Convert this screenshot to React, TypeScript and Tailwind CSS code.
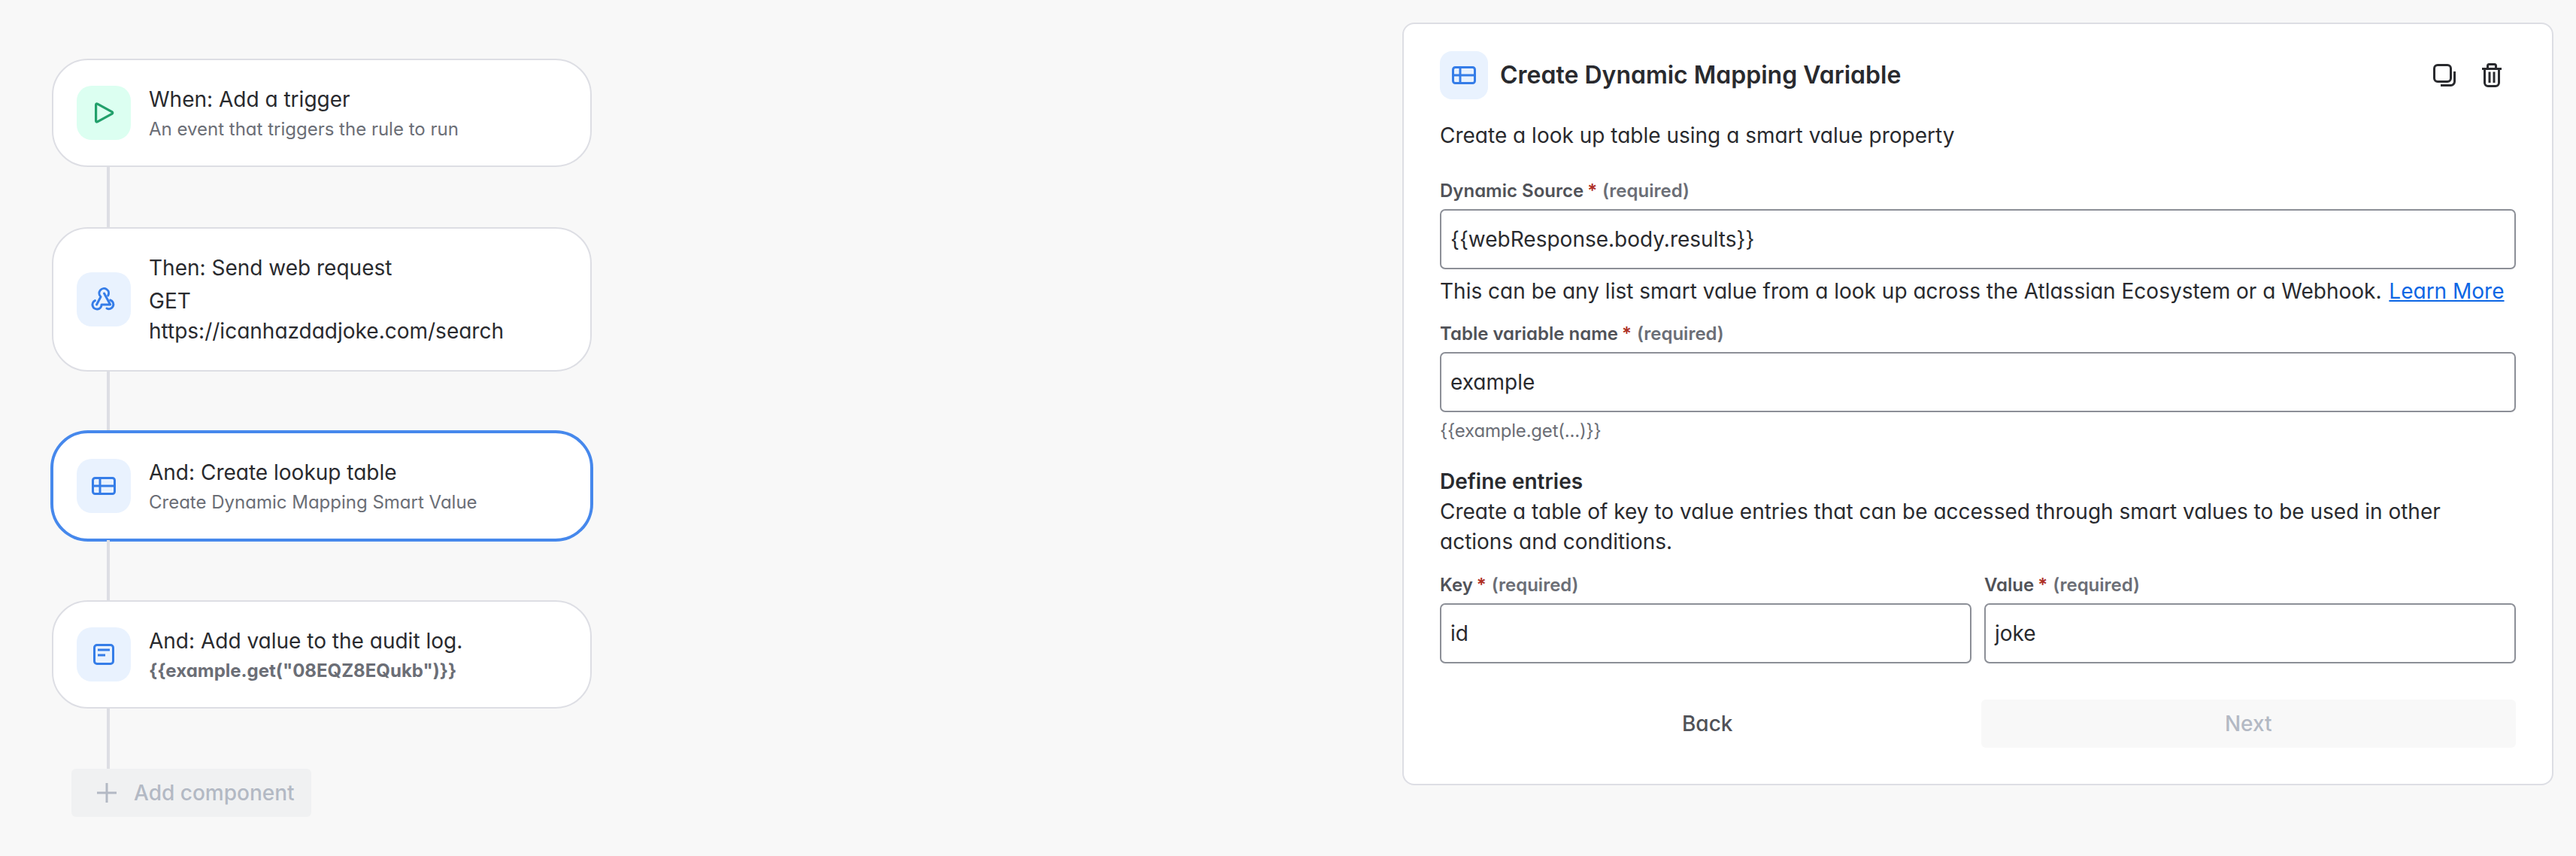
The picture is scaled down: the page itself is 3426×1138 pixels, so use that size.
import React from "react";

const BLUE = "#357de8";

function IconBox({ green, children }: { green?: boolean; children: React.ReactNode }) {
  return (
    <div className={`flex h-[72px] w-[72px] shrink-0 items-center justify-center rounded-[20px] ${green ? "bg-[#dcfff1]" : "bg-[#e9f2fe]"}`}>
      {children}
    </div>
  );
}

function PlayIcon() {
  return (
    <svg width="72" height="72" viewBox="0 0 72 72" fill="none">
      <path
        d="M25.6 25.5Q25.6 23.3 27.6 24.2L46.8 34.6Q48.8 36 46.8 37.4L27.6 47.8Q25.6 48.7 25.6 46.5Z"
        stroke="#22a06b"
        strokeWidth="3.2"
        strokeLinejoin="round"
      />
    </svg>
  );
}

function WebhookIcon() {
  return (
    <svg width="72" height="72" viewBox="0 0 72 72" fill="none" stroke={BLUE} strokeWidth="3" strokeLinecap="round" strokeLinejoin="round">
      <path d="M26.5 43L32 32.5A6.3 6.3 0 1 1 41.7 31" />
      <path d="M36.5 28L44.7 43H33A6 6 0 1 1 24.4 37.6" />
      <path d="M44.7 37A6 6 0 1 1 40 48" />
    </svg>
  );
}

function TableIcon() {
  return (
    <svg width="32" height="24" viewBox="0 0 32 24" fill="none" stroke={BLUE} strokeWidth="3">
      <rect x="1.5" y="1.5" width="29" height="21" rx="3" />
      <path d="M1.5 12H30.5M11 1.5V22.5" />
    </svg>
  );
}

function LogIcon() {
  return (
    <svg width="28" height="28" viewBox="0 0 28 28" fill="none" stroke={BLUE} strokeWidth="3">
      <rect x="1.5" y="1.5" width="25" height="25" rx="3.5" />
      <path d="M6 8H22M6 15H16" />
    </svg>
  );
}

function CopyIcon() {
  return (
    <svg width="30" height="30" viewBox="0 0 30 30" fill="none" stroke="#292a2e" strokeWidth="3">
      <rect x="1.5" y="1.5" width="22" height="22" rx="4.5" />
      <path d="M28.5 10V23.5a5 5 0 0 1-5 5H10" />
    </svg>
  );
}

function TrashIcon() {
  return (
    <svg width="26" height="32" viewBox="0 0 26 32" fill="none" stroke="#292a2e" strokeWidth="3">
      <path d="M0 7.5H26" />
      <path d="M7.5 7V3.5a2 2 0 0 1 2-2h7a2 2 0 0 1 2 2V7" />
      <path d="M3.5 7.5V26a4.5 4.5 0 0 0 4.5 4.5h10a4.5 4.5 0 0 0 4.5-4.5V7.5" />
      <path d="M10 11.5V26M16 11.5V26" />
    </svg>
  );
}

function Node({
  icon,
  green,
  selected,
  children,
}: {
  icon: React.ReactNode;
  green?: boolean;
  selected?: boolean;
  children: React.ReactNode;
}) {
  return (
    <div
      className={`flex items-center gap-[24px] rounded-[48px] bg-white px-[31px] py-[32px] ${
        selected ? "border-2 border-[#4688ec] shadow-[0_0_0_2px_#4688ec]" : "border-2 border-[#dddee4]"
      }`}
    >
      <IconBox green={green}>{icon}</IconBox>
      <div className="min-w-0">{children}</div>
    </div>
  );
}

function Connector() {
  return <div className="ml-[73px] h-[80px] w-[4px] bg-[#dddee4]" />;
}

function Title({ children, className = "" }: { children: React.ReactNode; className?: string }) {
  return <div className={`text-[28px] leading-[40px] text-[#292a2e] ${className}`}>{children}</div>;
}

function Sub({ bold, children }: { bold?: boolean; children: React.ReactNode }) {
  return <div className={`mt-[4px] text-[24px] leading-[32px] text-[#6b6e76] ${bold ? "font-bold" : ""}`}>{children}</div>;
}

function Label({ children }: { children: React.ReactNode }) {
  return (
    <div className="text-[24px] leading-[32px] font-semibold text-[#505258]">
      {children}
      <span className="ml-[5px] text-[#ae2e24]">*</span>
      <span className="ml-[7px] text-[#6b6e76]">(required)</span>
    </div>
  );
}

function Field({ children }: { children: React.ReactNode }) {
  return (
    <div className="mt-[8px] flex h-[80px] items-center rounded-[7px] border-2 border-[#8c8f97] bg-white pl-[12px] text-[28px] text-[#292a2e]">
      {children}
    </div>
  );
}

export default function App() {
  return (
    <div className="flex min-h-[1138px] w-full bg-[#f8f8f8] font-['Inter',sans-serif] [font-feature-settings:'cv11']">
      <div className="ml-[69px] mt-[78px] w-[718px]">
        <Node green icon={<PlayIcon />}>
          <Title>When: Add a trigger</Title>
          <Sub>An event that triggers the rule to run</Sub>
        </Node>
        <Connector />
        <Node icon={<WebhookIcon />}>
          <Title>Then: Send web request</Title>
          <Title className="mt-[4px]">GET</Title>
          <Title>https://icanhazdadjoke.com/search</Title>
        </Node>
        <Connector />
        <Node selected icon={<TableIcon />}>
          <Title>And: Create lookup table</Title>
          <Sub>Create Dynamic Mapping Smart Value</Sub>
        </Node>
        <Connector />
        <Node icon={<LogIcon />}>
          <Title>And: Add value to the audit log.</Title>
          <Sub bold>{'{{example.get("08EQZ8EQukb")}}'}</Sub>
        </Node>
        <Connector />
        <div className="ml-[26px] flex h-[64px] w-[319px] items-center gap-[22px] rounded-[6px] bg-[#f0f1f2] pl-[33px] text-[28px] font-medium text-[#b3b9c4]">
          <svg width="28" height="28" viewBox="0 0 28 28" fill="none" stroke="#b3b9c4" strokeWidth="3">
            <path d="M14 1V27M1 14H27" />
          </svg>
          <span>Add component</span>
        </div>
      </div>

      <div className="ml-auto mr-[30px] mt-[30px] h-[1014px] w-[1531px] rounded-[16px] border-2 border-[#dddee4] bg-white px-[48px] pb-[48px] pt-[36px]">
        <div className="flex items-center">
          <div className="flex h-[64px] w-[64px] items-center justify-center rounded-[16px] bg-[#e9f2fe]">
            <TableIcon />
          </div>
          <h1 className="ml-[16px] text-[32px] font-semibold text-[#292a2e]">Create Dynamic Mapping Variable</h1>
          <div className="ml-auto mr-[19px] flex items-center gap-[35px]">
            <CopyIcon />
            <TrashIcon />
          </div>
        </div>

        <div className="mt-[28px] text-[28px] leading-[40px] text-[#292a2e]">Create a look up table using a smart value property</div>

        <div className="mt-[38px]">
          <Label>Dynamic Source</Label>
        </div>
        <Field>{"{{webResponse.body.results}}"}</Field>
        <div className="mt-[9px] text-[28px] leading-[40px] text-[#292a2e]">
          This can be any list smart value from a look up across the Atlassian Ecosystem or a Webhook.{" "}
          <a className="ml-[2px] text-[#0c66e4] underline">Learn More</a>
        </div>

        <div className="mt-[21px]">
          <Label>Table variable name</Label>
        </div>
        <Field>example</Field>
        <div className="mt-[9px] text-[24px] leading-[32px] tracking-[-0.2px] text-[#6b6e76]">{"{{example.get(...)}}"}</div>

        <div className="mt-[31px] text-[28px] leading-[40px] font-semibold text-[#292a2e]">Define entries</div>
        <div className="text-[28px] leading-[40px] text-[#292a2e]">
          Create a table of key to value entries that can be accessed through smart values to be used in other
          <br />
          actions and conditions.
        </div>

        <div className="mt-[22px] grid grid-cols-2 gap-x-[17px]">
          <Label>Key</Label>
          <Label>Value</Label>
          <Field>id</Field>
          <Field>joke</Field>
        </div>

        <div className="mt-[48px] grid grid-cols-2 gap-x-[8px]">
          <div className="flex h-[64px] items-center justify-center text-[28px] font-medium text-[#505258]">Back</div>
          <div className="flex h-[64px] items-center justify-center rounded-[6px] bg-[#f8f8f8] text-[28px] font-medium text-[#b3b9c4]">Next</div>
        </div>
      </div>
    </div>
  );
}
